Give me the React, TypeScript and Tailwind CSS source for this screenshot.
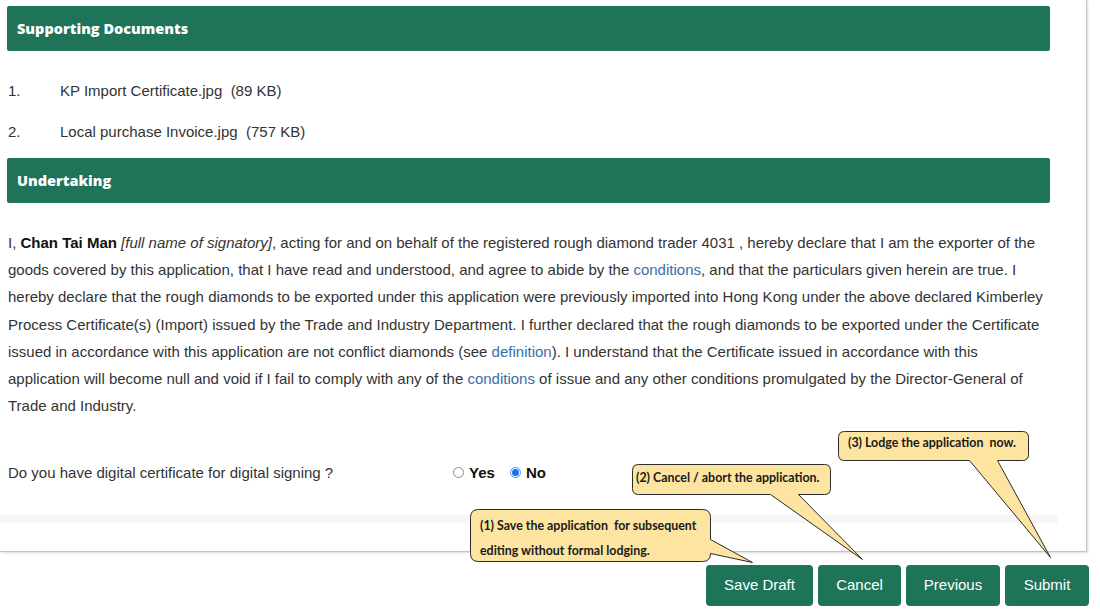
import React from "react";

const GREEN = "bg-[#1e7359]";

function Header({ children }: { children: React.ReactNode }) {
  return (
    <div
      className={`${GREEN} h-[45px] w-[1043px] rounded-[2px] flex items-center pl-[10px] text-white font-extrabold text-[14.5px]`}
      style={{ fontFamily: '"Open Sans", "Noto Sans", sans-serif' }}
    >
      {children}
    </div>
  );
}

function Link({ children }: { children: React.ReactNode }) {
  return <span className="text-[#3a6ea8]">{children}</span>;
}

function Btn({ children, w }: { children: React.ReactNode; w: string }) {
  return (
    <div className={`${GREEN} ${w} h-[41px] rounded-[4px] flex items-center justify-center text-white text-[15px]`}>
      {children}
    </div>
  );
}

export default function App() {
  return (
    <div
      className="relative w-[1100px] h-[613px] bg-white overflow-hidden text-[#333] text-[15px]"
      style={{ fontFamily: '"Liberation Sans", Arial, sans-serif' }}
    >
      <div className="w-[1087px] h-[552px] border-r border-b border-[#c4c4c4] shadow-[1px_1px_2px_rgba(0,0,0,0.15)] pt-[6px]">
        <div className="pl-[7px]">
          <Header>Supporting Documents</Header>
        </div>
        <div className="pt-[27px] pl-[8px]">
          <div className="flex h-[27px] items-center">
            <span className="w-[52px]">1.</span>
            <span className="whitespace-pre">KP Import Certificate.jpg  (89 KB)</span>
          </div>
          <div className="flex h-[27px] items-center mt-[14px]">
            <span className="w-[52px]">2.</span>
            <span className="whitespace-pre">Local purchase Invoice.jpg  (757 KB)</span>
          </div>
        </div>
        <div className="pl-[7px] mt-[12px]">
          <Header>Undertaking</Header>
        </div>
        <p className="mt-[26px] pl-[8px] w-[1060px] leading-[27.2px]">
          I, <b className="text-[#111]">Chan Tai Man</b> <i>[full name of signatory]</i>, acting for and on behalf of the registered rough diamond trader 4031 , hereby declare that I am the exporter of the
          <br />
          goods covered by this application, that I have read and understood, and agree to abide by the <Link>conditions</Link>, and that the particulars given herein are true. I
          <br />
          hereby declare that the rough diamonds to be exported under this application were previously imported into Hong Kong under the above declared Kimberley
          <br />
          Process Certificate(s) (Import) issued by the Trade and Industry Department. I further declared that the rough diamonds to be exported under the Certificate
          <br />
          issued in accordance with this application are not conflict diamonds (see <Link>definition</Link>). I understand that the Certificate issued in accordance with this
          <br />
          application will become null and void if I fail to comply with any of the <Link>conditions</Link> of issue and any other conditions promulgated by the Director-General of
          <br />
          Trade and Industry.
        </p>
        <div className="mt-[40px] pl-[8px] flex items-center h-[27px]">
          <span className="w-[445px]">Do you have digital certificate for digital signing ?</span>
          <span className="w-[11px] h-[11px] rounded-full border border-[#8a8a8a] bg-white" />
          <b className="ml-[5px] text-[#111]">Yes</b>
          <span className="ml-[15px] w-[11px] h-[11px] rounded-full border border-[#4a90e2] bg-white flex items-center justify-center">
            <span className="w-[7px] h-[7px] rounded-full bg-[#1a73e8]" />
          </span>
          <b className="ml-[5px] text-[#111]">No</b>
        </div>
        <div className="mt-[29px] w-[1058px] h-[8px] bg-[#f7f7f7]" />
      </div>

      <div className="flex gap-[5px] pl-[706px] mt-[13px]">
        <Btn w="w-[107px]">Save Draft</Btn>
        <Btn w="w-[83px]">Cancel</Btn>
        <Btn w="w-[94px]">Previous</Btn>
        <Btn w="w-[84px]">Submit</Btn>
      </div>

      {/* Callouts */}
      <svg className="absolute left-0 top-0" width="1100" height="613" viewBox="0 0 1100 613">
        <g fill="#fde4a0" stroke="#2b2b2b" strokeWidth="1" strokeLinejoin="miter">
          <path d="M478.5 509.5 H702.5 Q710.5 509.5 710.5 517.5 V539.5 L752.5 562.5 L710.5 553.5 V553.5 Q710.5 561.5 702.5 561.5 H478.5 Q470.5 561.5 470.5 553.5 V517.5 Q470.5 509.5 478.5 509.5 Z" />
          <path d="M638.5 464.5 H824.5 Q830.5 464.5 830.5 470.5 V488.5 Q830.5 494.5 824.5 494.5 H798.5 L862.5 559.5 L770.5 494.5 H638.5 Q632.5 494.5 632.5 488.5 V470.5 Q632.5 464.5 638.5 464.5 Z" />
          <path d="M844.5 431.5 H1022.5 Q1028.5 431.5 1028.5 437.5 V454.5 Q1028.5 460.5 1022.5 460.5 H997.5 L1050.5 557.5 L969.5 460.5 H844.5 Q838.5 460.5 838.5 454.5 V437.5 Q838.5 431.5 844.5 431.5 Z" />
        </g>
      </svg>
      <div
        className="absolute left-[480px] top-[513px] text-[12.4px] font-bold text-[#1a1a1a] leading-[25px] whitespace-pre"
        style={{ fontFamily: 'Lato, "Noto Sans", sans-serif' }}
      >
        {"(1) Save the application  for subsequent\nediting without formal lodging."}
      </div>
      <div
        className="absolute left-[636px] top-[468px] text-[12.4px] font-bold text-[#1a1a1a] leading-[20px] whitespace-pre"
        style={{ fontFamily: 'Lato, "Noto Sans", sans-serif' }}
      >
        {"(2) Cancel / abort the application."}
      </div>
      <div
        className="absolute left-[848px] top-[433px] text-[12.4px] font-bold text-[#1a1a1a] leading-[20px] whitespace-pre"
        style={{ fontFamily: 'Lato, "Noto Sans", sans-serif' }}
      >
        {"(3) Lodge the application  now."}
      </div>
    </div>
  );
}
